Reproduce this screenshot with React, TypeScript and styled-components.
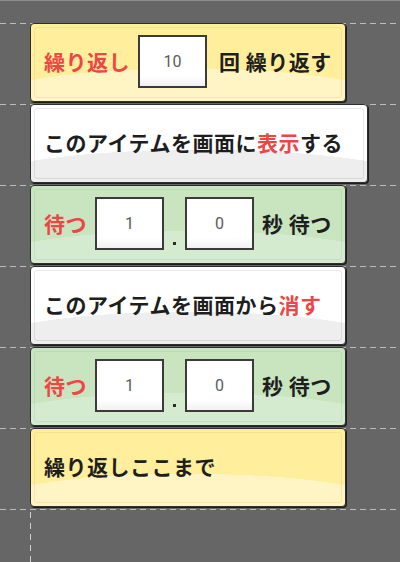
import React from 'react';
import styled, { createGlobalStyle, css } from 'styled-components';

const GlobalStyle = createGlobalStyle`
  html, body {
    margin: 0;
    height: 100%;
    background: #666666;
  }
  #root {
    height: 100%;
  }
`;

type Tone = 'yellow' | 'white' | 'green';

const tones: Record<Tone, { top: string; gloss: string; inner: string }> = {
  yellow: { top: '#ffee9c', gloss: '#fff4c4', inner: 'rgba(230, 190, 80, 0.25)' },
  white: { top: '#ffffff', gloss: '#eeeeee', inner: 'rgba(0, 0, 0, 0.09)' },
  green: { top: '#c8e5c0', gloss: '#d5ebd0', inner: 'rgba(80, 140, 80, 0.12)' },
};

const Canvas = styled.div`
  height: 100%;
  box-sizing: border-box;
  border-top: 1px solid #8e8e8e;
  padding-top: 22px;
  display: flex;
  flex-direction: column;
  font-family: 'Noto Sans CJK JP', 'Noto Sans', sans-serif;
`;

const dashH = css`
  background-image: repeating-linear-gradient(
    90deg,
    #bdbdbd 0 6px,
    transparent 6px 10px
  );
  background-size: 100% 1px;
  background-repeat: no-repeat;
  background-position: 0 0;
`;

const Row = styled.div`
  height: 81px;
  flex-shrink: 0;
  ${dashH}
`;

const Tail = styled.div`
  flex: 1;
  background-image:
    repeating-linear-gradient(90deg, #bdbdbd 0 6px, transparent 6px 10px),
    repeating-linear-gradient(180deg, #d0d0d0 0 6px, transparent 6px 11px);
  background-size: 100% 1px, 1px 100%;
  background-position: 0 0, 30px 3px;
  background-repeat: no-repeat;
`;

const Block = styled.div<{ $tone: Tone; $wide?: boolean }>`
  position: relative;
  box-sizing: border-box;
  margin-left: 30px;
  width: ${(p) => (p.$wide ? 338 : 316)}px;
  height: 79px;
  border: 1px solid #2e2e2e;
  border-radius: 4px;
  box-shadow: 1px 1px 0 #1e1e1e;
  background: ${(p) => css`
    radial-gradient(ellipse 66% 42% at 50% 100%, ${tones[p.$tone].gloss} 99%, transparent 100%),
    ${tones[p.$tone].top}
  `};
  display: flex;
  align-items: center;
  gap: 8px;
  padding-left: 13px;
  padding-bottom: 3px;
  font-size: 21px;
  font-weight: 700;
  letter-spacing: 0.5px;
  color: #1e1e1e;
  white-space: nowrap;

  &::before {
    content: '';
    position: absolute;
    inset: 3px;
    border: 1px solid ${(p) => tones[p.$tone].inner};
    border-radius: 3px;
    pointer-events: none;
  }
`;

const Red = styled.span`
  color: #ee4646;
`;

const Line = styled.span<{ $lead?: number }>`
  margin-left: ${(p) => p.$lead ?? 0}px;
`;

const NumBox = styled.div`
  box-sizing: border-box;
  width: 69px;
  height: 53px;
  flex-shrink: 0;
  border: 2px solid #3b3b3b;
  background: linear-gradient(#ffffff 80%, #f1f1f1);
  display: flex;
  align-items: center;
  justify-content: center;
  font-family: Roboto, 'Liberation Sans', sans-serif;
  font-size: 16px;
  font-weight: 400;
  letter-spacing: 0;
  color: #5c5c5c;
`;

const Dot = styled.span`
  width: 3px;
  height: 3px;
  background: #2a2a2a;
  align-self: flex-end;
  margin: 0 1px 15px;
`;

const Wait = () => (
  <Block $tone="green">
    <Red>待つ</Red>
    <NumBox>1</NumBox>
    <Dot />
    <NumBox>0</NumBox>
    <Line>秒 待つ</Line>
  </Block>
);

export default function App() {
  return (
    <>
      <GlobalStyle />
      <Canvas>
        <Row>
          <Block $tone="yellow">
            <Red>繰り返し</Red>
            <NumBox>10</NumBox>
            <Line $lead={4}>回 繰り返す</Line>
          </Block>
        </Row>
        <Row>
          <Block $tone="white" $wide>
            <Line>
              このアイテムを画面に<Red>表示</Red>する
            </Line>
          </Block>
        </Row>
        <Row>
          <Wait />
        </Row>
        <Row>
          <Block $tone="white">
            <Line>
              このアイテムを画面から<Red>消す</Red>
            </Line>
          </Block>
        </Row>
        <Row>
          <Wait />
        </Row>
        <Row>
          <Block $tone="yellow">
            <Line>繰り返しここまで</Line>
          </Block>
        </Row>
        <Tail />
      </Canvas>
    </>
  );
}
